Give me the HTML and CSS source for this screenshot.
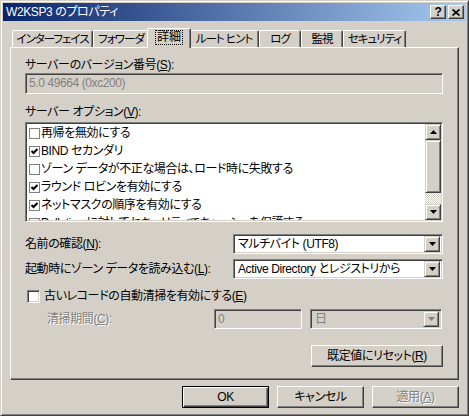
FILE: index.html
```html
<!DOCTYPE html>
<html lang="ja">
<head>
  <meta charset="UTF-8" />
  <title>W2KSP3 のプロパティ</title>
  <link rel="stylesheet" href="styles.css">
</head>
<body>
  <div class="window">
    <!-- Title bar -->
    <div class="titlebar">
      <span class="title">W2KSP3 のプロパティ</span>
      <div class="title-buttons">
        <span class="tbtn help">?</span>
        <span class="tbtn">
          <svg width="8" height="7" viewBox="0 0 8 7"><path d="M0.5 0.5L7.5 6.5M7.5 0.5L0.5 6.5" stroke="#000" stroke-width="1.7"/></svg>
        </span>
      </div>
    </div>

    <!-- Tabs -->
    <div class="tabs">
      <span class="tab t-iface">インターフェイス</span>
      <span class="tab t-fwd">フォワーダ</span>
      <span class="tab t-adv active"><span class="focus">詳細</span></span>
      <span class="tab t-root">ルート ヒント</span>
      <span class="tab t-log">ログ</span>
      <span class="tab t-mon">監視</span>
      <span class="tab t-sec">セキュリティ</span>
    </div>

    <!-- Tab page -->
    <div class="panel">
      <div class="label">サーバーのバージョン番号(<u>S</u>):</div>
      <div class="field disabled version">5.0 49664 (0xc200)</div>

      <div class="label options-label">サーバー オプション(<u>V</u>):</div>
      <div class="listbox">
        <div class="list-items">
          <div class="item"><span class="flat-check"></span>再帰を無効にする</div>
          <div class="item"><span class="flat-check checked"><svg width="9" height="9" viewBox="0 0 9 9"><path d="M1.5 4L3.5 6L7.5 2" fill="none" stroke="#000" stroke-width="2"/></svg></span>BIND セカンダリ</div>
          <div class="item"><span class="flat-check"></span>ゾーン データが不正な場合は、ロード時に失敗する</div>
          <div class="item"><span class="flat-check checked"><svg width="9" height="9" viewBox="0 0 9 9"><path d="M1.5 4L3.5 6L7.5 2" fill="none" stroke="#000" stroke-width="2"/></svg></span>ラウンド ロビンを有効にする</div>
          <div class="item"><span class="flat-check checked"><svg width="9" height="9" viewBox="0 0 9 9"><path d="M1.5 4L3.5 6L7.5 2" fill="none" stroke="#000" stroke-width="2"/></svg></span>ネットマスクの順序を有効にする</div>
          <div class="item"><span class="flat-check"></span>Pollution に対してセキュリティでキャッシュを保護する</div>
        </div>
        <div class="vscroll">
          <span class="sbtn"><svg width="7" height="4" viewBox="0 0 7 4"><path d="M3.5 0L7 4H0z"/></svg></span>
          <span class="thumb"></span>
          <span class="track"></span>
          <span class="sbtn"><svg width="7" height="4" viewBox="0 0 7 4"><path d="M0 0H7L3.5 4z"/></svg></span>
        </div>
      </div>

      <div class="row first-row">
        <span class="row-label">名前の確認(<u>N</u>):</span>
        <div class="combo">
          <span class="combo-text">マルチバイト (UTF8)</span>
          <span class="drop"><svg width="7" height="4" viewBox="0 0 7 4"><path d="M0 0H7L3.5 4z"/></svg></span>
        </div>
      </div>
      <div class="row second-row">
        <span class="row-label">起動時にゾーン データを読み込む(<u>L</u>):</span>
        <div class="combo">
          <span class="combo-text">Active Directory とレジストリから</span>
          <span class="drop"><svg width="7" height="4" viewBox="0 0 7 4"><path d="M0 0H7L3.5 4z"/></svg></span>
        </div>
      </div>

      <div class="check-row">
        <span class="checkbox"></span>
        <span>古いレコードの自動清掃を有効にする(<u>E</u>)</span>
      </div>

      <div class="scavenge-row">
        <span class="scavenge-label">清掃期間(<u>C</u>):</span>
        <div class="field disabled period">0</div>
        <div class="combo disabled unit">
          <span class="combo-text">日</span>
          <span class="drop"><svg width="7" height="4" viewBox="0 0 7 4"><path d="M0 0H7L3.5 4z" fill="#808080"/></svg></span>
        </div>
      </div>

      <div class="reset-row">
        <button class="btn reset">既定値にリセット(<u>R</u>)</button>
      </div>
    </div>

    <!-- Dialog buttons -->
    <div class="buttons">
      <button class="btn default">OK</button>
      <button class="btn">キャンセル</button>
      <button class="btn disabled">適用(<u>A</u>)</button>
    </div>
  </div>
</body>
</html>
```

FILE: styles.css
```css
/* Basic resets */
* {
  margin: 0;
  padding: 0;
  box-sizing: border-box;
}
body {
  background: #d4d0c8;
  font-family: "Liberation Sans", "Noto Sans CJK JP", sans-serif;
  font-size: 12px;
  font-feature-settings: "palt";
  letter-spacing: -0.4px;
  color: #000;
}
u {
  text-underline-offset: 1px;
}

/* Window frame */
.window {
  width: 469px;
  height: 416px;
  border: 1px solid;
  border-color: #d4d0c8 #404040 #404040 #d4d0c8;
  box-shadow: inset 1px 1px #fff, inset -1px -1px #808080;
  padding: 2px;
  display: flex;
  flex-direction: column;
}

/* Title bar */
.titlebar {
  height: 18px;
  background: linear-gradient(to right, #0a246a, #a6caf0);
  display: flex;
  align-items: center;
  justify-content: space-between;
  padding: 0 2px 0 2px;
  color: #fff;
}
.title {
  line-height: 18px;
  padding-left: 1px;
}
.title-buttons {
  display: flex;
  gap: 2px;
}
.tbtn {
  width: 16px;
  height: 14px;
  background: #d4d0c8;
  border: 1px solid;
  border-color: #fff #404040 #404040 #fff;
  box-shadow: inset -1px -1px #808080;
  display: flex;
  align-items: center;
  justify-content: center;
  color: #000;
}
.tbtn.help {
  font-weight: bold;
  font-size: 12px;
  line-height: 12px;
}

/* Tabs */
.tabs {
  display: flex;
  align-items: flex-end;
  height: 19px;
  margin: 7px 0 0 9px;
}
.tab {
  height: 17px;
  border: 1px solid;
  border-color: #fff #404040 transparent #fff;
  border-bottom: none;
  border-radius: 2px 2px 0 0;
  box-shadow: inset -1px 0 #808080;
  background: #d4d0c8;
  display: flex;
  align-items: center;
  justify-content: center;
  font-size: 11.5px;
  line-height: 14px;
  letter-spacing: -1px;
  white-space: nowrap;
}
.t-iface { width: 81px; }
.t-fwd { width: 56px; }
.t-adv { width: 44px; }
.t-root { width: 70px; }
.t-log { width: 42px; }
.t-mon { width: 42px; }
.t-sec { width: 63px; }
.tab.active {
  height: 20px;
  margin: 0 -2px -1px;
  position: relative;
  z-index: 1;
  padding-bottom: 2px;
  font-size: 12px;
  letter-spacing: 0;
}
.focus {
  border: 1px dotted #000;
  padding: 0 1px;
  line-height: 13px;
}

/* Tab page */
.panel {
  height: 333px;
  margin: 0 7px;
  border: 1px solid;
  border-color: #fff #404040 #404040 #fff;
  box-shadow: inset -1px -1px #808080;
  padding: 10px 15px 0 14px;
}
.label {
  line-height: 14px;
}
.options-label {
  margin-top: 11px;
}

/* Sunken fields */
.field,
.combo,
.listbox {
  border: 1px solid;
  border-color: #808080 #fff #fff #808080;
  box-shadow: inset 1px 1px #404040, inset -1px -1px #d4d0c8;
  background: #fff;
}
.field {
  padding: 2px 3px;
  line-height: 15px;
}
.field.disabled,
.combo.disabled {
  background: #d4d0c8;
  color: #808080;
}
.version {
  height: 21px;
  margin-top: 1px;
}

/* Options list */
.listbox {
  height: 100px;
  margin-top: 3px;
  padding: 1px;
  display: flex;
  overflow: hidden;
}
.list-items {
  flex: 1;
  overflow: hidden;
}
.item {
  height: 18px;
  display: flex;
  align-items: center;
  padding-left: 2px;
  white-space: nowrap;
  line-height: 14px;
}
.flat-check {
  width: 11px;
  height: 11px;
  border: 1px solid #808080;
  background: #fff;
  margin-right: 1px;
  display: flex;
  flex: none;
}
.vscroll {
  width: 16px;
  display: flex;
  flex-direction: column;
}
.sbtn,
.drop,
.thumb {
  background: #d4d0c8;
  border: 1px solid;
  border-color: #d4d0c8 #404040 #404040 #d4d0c8;
  box-shadow: inset 1px 1px #fff, inset -1px -1px #808080;
}
.sbtn {
  height: 16px;
  display: flex;
  align-items: center;
  justify-content: center;
}
.thumb {
  height: 53px;
}
.track {
  flex: 1;
  background: repeating-conic-gradient(#fff 0 25%, #d4d0c8 0 50%) 0 0 / 2px 2px;
}

/* Label + combo rows */
.row {
  display: flex;
  align-items: center;
  justify-content: space-between;
}
.first-row {
  margin-top: 12px;
}
.second-row {
  margin-top: 5px;
}
.row-label {
  line-height: 14px;
}
.combo {
  width: 210px;
  height: 20px;
  padding: 2px;
  display: flex;
  align-items: center;
}
.combo-text {
  flex: 1;
  padding-left: 2px;
  line-height: 14px;
  white-space: nowrap;
}
.drop {
  width: 16px;
  height: 16px;
  display: flex;
  align-items: center;
  justify-content: center;
}

/* Scavenging */
.check-row {
  margin-top: 10px;
  height: 14px;
  display: flex;
  align-items: center;
  padding-left: 2px;
  gap: 4px;
  line-height: 14px;
}
.checkbox {
  width: 13px;
  height: 13px;
  border: 1px solid;
  border-color: #808080 #fff #fff #808080;
  box-shadow: inset 1px 1px #404040, inset -1px -1px #d4d0c8;
  background: #fff;
}
.scavenge-row {
  margin-top: 6px;
  display: flex;
  align-items: center;
}
.scavenge-label {
  width: 189px;
  padding-left: 22px;
  color: #808080;
  text-shadow: 1px 1px #fff;
  line-height: 14px;
}
.period {
  width: 88px;
  height: 20px;
  margin-right: 8px;
}
.unit {
  width: 132px;
}

/* Buttons */
.btn {
  font: inherit;
  font-feature-settings: "palt";
  letter-spacing: inherit;
  color: #000;
  background: #d4d0c8;
  border: 1px solid;
  border-color: #fff #404040 #404040 #fff;
  box-shadow: inset -1px -1px #808080;
  height: 22px;
  line-height: 14px;
}
.btn.default {
  border-color: #000;
  box-shadow: inset 1px 1px #fff, inset -1px -1px #404040, inset -2px -2px #808080;
}
.btn.disabled {
  color: #808080;
  text-shadow: 1px 1px #fff;
}
.reset-row {
  margin-top: 16px;
  display: flex;
  justify-content: flex-end;
}
.reset {
  width: 132px;
}
.buttons {
  display: flex;
  justify-content: flex-end;
  gap: 8px;
  margin: 6px 7px 0;
}
.buttons .btn {
  width: 87px;
}
```
